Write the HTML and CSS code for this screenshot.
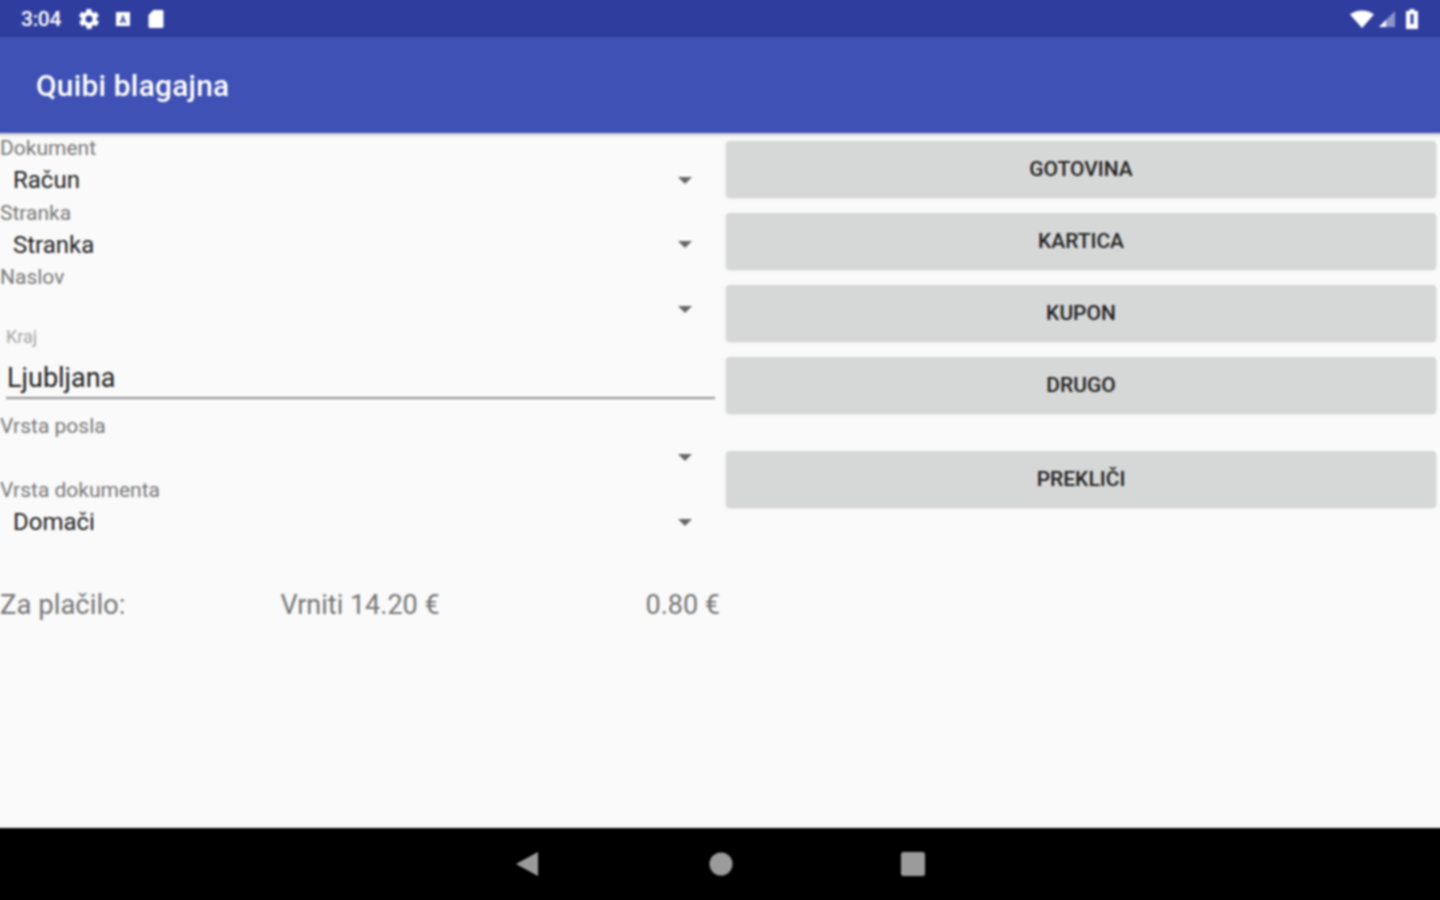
FILE: index.html
```html
<!DOCTYPE html>
<html lang="sl">

<head>
    <meta charset="UTF-8">
    <meta name="viewport" content="width=device-width, initial-scale=1.0">
    <title>Quibi blagajna</title>
    <link rel="stylesheet" href="styles.css">
</head>

<body>
    <div class="screen">
        <div class="status-bar">
            <div class="status-left">
                <span class="clock">3:04</span>
                <svg width="20" height="20" viewBox="2 2 20 20"><path fill="#fff" d="M19.4 13c.1-.3.1-.7.1-1s0-.7-.1-1l2.1-1.600c.2-.2.2-.4.1-.6l-2-3.500c-.1-.2-.4-.3-.6-.2l-2.500 1c-.5-.4-1.100-.7-1.700-1l-.4-2.600c0-.3-.2-.4-.5-.4h-4c-.3 0-.5.1-.5.4l-.4 2.600c-.6.3-1.200.6-1.700 1l-2.500-1c-.2-.1-.5 0-.6.2l-2 3.500c-.1.2-.1.4.1.6L4.600 11c-.1.3-.1.7-.1 1s0 .7.1 1l-2.100 1.600c-.2.2-.2.4-.1.6l2 3.500c.1.2.4.3.6.2l2.500-1c.5.4 1.100.7 1.700 1l.4 2.600c0 .3.2.4.5.4h4c.3 0 .5-.1.5-.4l.4-2.600c.6-.3 1.200-.6 1.700-1l2.500 1c.2.1.5 0 .6-.2l2-3.500c.1-.2.1-.4-.1-.6L19.400 13zM12 15.500a3.500 3.500 0 1 1 0-7 3.500 3.500 0 0 1 0 7z"/></svg>
                <svg width="16" height="16" viewBox="0 0 16 16"><path fill="#fff" fill-rule="evenodd" d="M1 1h14v14H1zM8 3.500 4.800 12h1.700l.6-1.700h1.800l.6 1.700h1.700L8 3.500zM8 6.500l.5 2.400h-1z"/></svg>
                <svg width="18" height="20" viewBox="0 0 18 20"><path fill="#fff" d="M6.500 1H15c.8 0 1.500.7 1.500 1.500v15c0 .8-.7 1.500-1.500 1.500H3c-.8 0-1.500-.7-1.500-1.500V6z"/></svg>
            </div>
            <div class="status-right">
                <svg width="26" height="20" viewBox="0 0 26 20"><path fill="#fff" d="M1 5.500C4.500 2.800 8.500 1.500 13 1.500s8.500 1.300 12 4L13 19z"/></svg>
                <svg width="18" height="18" viewBox="0 0 18 18"><path fill="#8b94c9" d="M1 17 17 1v16z"/><path fill="#fff" d="M1 17l7-7v7z"/></svg>
                <svg class="battery" width="14" height="20" viewBox="0 0 14 20"><path fill="#fff" d="M4.500 0h5v2H13v18H1V2h3.500z"/><path fill="#2f3e9e" d="M5.500 5h3v10h-3z"/></svg>
            </div>
        </div>
        <header class="app-bar">Quibi blagajna</header>
        <main class="content">
            <section class="form">
                <div class="field">
                    <label class="field-label">Dokument</label>
                    <div class="spinner"><span>Račun</span><i class="arrow"></i></div>
                </div>
                <div class="field">
                    <label class="field-label">Stranka</label>
                    <div class="spinner"><span>Stranka</span><i class="arrow"></i></div>
                </div>
                <div class="field">
                    <label class="field-label">Naslov</label>
                    <div class="spinner"><span></span><i class="arrow"></i></div>
                </div>
                <div class="text-field">
                    <label class="float-label">Kraj</label>
                    <div class="text-value">Ljubljana</div>
                </div>
                <div class="field">
                    <label class="field-label">Vrsta posla</label>
                    <div class="spinner"><span></span><i class="arrow"></i></div>
                </div>
                <div class="field">
                    <label class="field-label">Vrsta dokumenta</label>
                    <div class="spinner"><span>Domači</span><i class="arrow"></i></div>
                </div>
                <div class="totals">
                    <span class="due">Za plačilo:</span>
                    <span class="change">Vrniti 14.20 €</span>
                    <span class="amount">0.80 €</span>
                </div>
            </section>
            <section class="actions">
                <button>GOTOVINA</button>
                <button>KARTICA</button>
                <button>KUPON</button>
                <button>DRUGO</button>
                <button class="cancel">PREKLIČI</button>
            </section>
        </main>
        <nav class="nav-bar">
            <svg width="26" height="26" viewBox="0 0 26 26"><path fill="#9b9b9b" d="M23 1v24L1 13z"/></svg>
            <svg width="24" height="24" viewBox="0 0 24 24"><circle fill="#9b9b9b" cx="12" cy="12" r="11.500"/></svg>
            <svg width="24" height="24" viewBox="0 0 24 24"><rect fill="#9b9b9b" width="24" height="24" rx="2.500"/></svg>
        </nav>
    </div>
</body>

</html>
```

FILE: styles.css
```css
* {
    box-sizing: border-box;
}

html,
body {
    margin: 0;
    height: 100%;
    overflow: hidden;
    background: #fafafa;
}

/* 4px bleed on every side so the blur doesn't fade at the window edge */
.screen {
    width: 1448px;
    height: 908px;
    margin: -4px;
    display: flex;
    flex-direction: column;
    font-family: Roboto, "Liberation Sans", sans-serif;
    filter: blur(.8px);
}

.status-bar {
    height: 41px;
    flex: none;
    background: #2f3e9e;
    color: #fff;
    display: flex;
    justify-content: space-between;
    align-items: center;
    padding: 4px 25px 0 25px;
}

.status-left,
.status-right {
    display: flex;
    align-items: center;
}

.status-left {
    gap: 16px;
}

.status-right {
    gap: 3px;
}

.battery {
    margin-left: 6px;
}

.clock {
    font-size: 21px;
    font-weight: 500;
    letter-spacing: -.3px;
    margin-right: 2px;
}

.app-bar {
    height: 96px;
    flex: none;
    background: #3f51b5;
    color: #fff;
    font-size: 30px;
    font-weight: 500;
    letter-spacing: .15px;
    line-height: 98px;
    padding-left: 40px;
    box-shadow: 0 1px 4px rgba(0, 0, 0, .3);
    position: relative;
}

.content {
    flex: 1;
    display: flex;
    background: #fafafa;
}

.form {
    width: 720px;
    flex: none;
    margin-left: 4px;
    padding-top: 3px;
}

.field {
    height: 64.500px;
    color: #777;
}

.field-label {
    display: block;
    height: 24px;
    line-height: 24px;
    font-size: 21px;
}

.spinner {
    height: 40px;
    display: flex;
    align-items: center;
    justify-content: space-between;
    padding: 0 28px 0 13px;
    color: #222;
    font-size: 24px;
}

.arrow {
    width: 0;
    height: 0;
    border-left: 7px solid transparent;
    border-right: 7px solid transparent;
    border-top: 7px solid #666;
}

.text-field {
    height: 86px;
    padding: 0 5px 0 6px;
    margin-top: -2px;
}

.float-label {
    display: block;
    height: 27px;
    line-height: 18px;
    font-size: 18px;
    color: #a5a5a5;
}

.text-value {
    height: 44px;
    line-height: 46px;
    font-size: 27px;
    padding-left: 1px;
    color: #222;
    border-bottom: 2px solid #8f8f8f;
}

.totals {
    display: grid;
    grid-template-columns: 1fr 1fr 1fr;
    margin-top: 44px;
    line-height: 36px;
    font-size: 27px;
    color: #757575;
}

.due {
    font-size: 27.500px;
}

.change {
    text-align: center;
}

.amount {
    text-align: right;
}

.actions {
    flex: 1;
    display: flex;
    flex-direction: column;
    gap: 16px;
    padding: 8px 8px 0 6px;
}

.actions button {
    height: 56px;
    border: 0;
    border-radius: 4px;
    background: #d6d7d7;
    color: #222;
    font-family: inherit;
    font-size: 21px;
    font-weight: 500;
    box-shadow: 0 1px 2px rgba(0, 0, 0, .2);
}

.actions .cancel {
    margin-top: 22px;
}

.nav-bar {
    height: 76px;
    flex: none;
    background: #000;
    display: flex;
    justify-content: center;
    align-items: center;
    gap: 168px;
    padding-bottom: 4px;
}
```
